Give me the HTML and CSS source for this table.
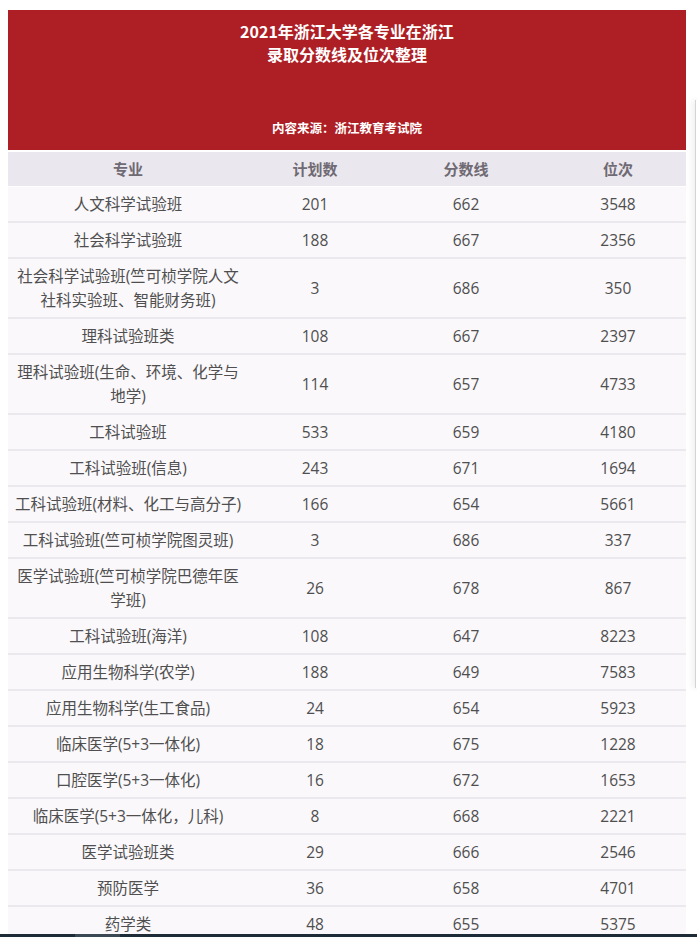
FILE: index.html
```html
<!DOCTYPE html>
<html lang="zh-CN">
<head>
<meta charset="utf-8">
<title>2021年浙江大学各专业在浙江录取分数线及位次整理</title>
<link rel="stylesheet" href="styles.css">
</head>
<body>
<main class="page">
  <header class="banner">
    <h1 class="banner-title">2021年浙江大学各专业在浙江<br>录取分数线及位次整理</h1>
    <p class="banner-source">内容来源：浙江教育考试院</p>
  </header>
  <table class="score-table">
    <colgroup>
      <col class="col-major">
      <col class="col-plan">
      <col class="col-score">
      <col class="col-rank">
    </colgroup>
    <thead>
      <tr><th>专业</th><th>计划数</th><th>分数线</th><th>位次</th></tr>
    </thead>
    <tbody>
      <tr><td>人文科学试验班</td><td>201</td><td>662</td><td>3548</td></tr>
      <tr><td>社会科学试验班</td><td>188</td><td>667</td><td>2356</td></tr>
      <tr><td>社会科学试验班(竺可桢学院人文社科实验班、智能财务班)</td><td>3</td><td>686</td><td>350</td></tr>
      <tr><td>理科试验班类</td><td>108</td><td>667</td><td>2397</td></tr>
      <tr><td>理科试验班(生命、环境、化学与地学)</td><td>114</td><td>657</td><td>4733</td></tr>
      <tr><td>工科试验班</td><td>533</td><td>659</td><td>4180</td></tr>
      <tr><td>工科试验班(信息)</td><td>243</td><td>671</td><td>1694</td></tr>
      <tr><td>工科试验班(材料、化工与高分子)</td><td>166</td><td>654</td><td>5661</td></tr>
      <tr><td>工科试验班(竺可桢学院图灵班)</td><td>3</td><td>686</td><td>337</td></tr>
      <tr><td>医学试验班(竺可桢学院巴德年医学班)</td><td>26</td><td>678</td><td>867</td></tr>
      <tr><td>工科试验班(海洋)</td><td>108</td><td>647</td><td>8223</td></tr>
      <tr><td>应用生物科学(农学)</td><td>188</td><td>649</td><td>7583</td></tr>
      <tr><td>应用生物科学(生工食品)</td><td>24</td><td>654</td><td>5923</td></tr>
      <tr><td>临床医学(5+3一体化)</td><td>18</td><td>675</td><td>1228</td></tr>
      <tr><td>口腔医学(5+3一体化)</td><td>16</td><td>672</td><td>1653</td></tr>
      <tr><td>临床医学(5+3一体化，儿科)</td><td>8</td><td>668</td><td>2221</td></tr>
      <tr><td>医学试验班类</td><td>29</td><td>666</td><td>2546</td></tr>
      <tr><td>预防医学</td><td>36</td><td>658</td><td>4701</td></tr>
      <tr><td>药学类</td><td>48</td><td>655</td><td>5375</td></tr>
    </tbody>
  </table>
</main>
<div class="side-panel"></div>
<div class="bottom-bar"><span class="bottom-bar-thumb"></span></div>
</body>
</html>
```
FILE: styles.css
```css
html {
  overflow: hidden;
  background: #ffffff;
}

body {
  margin: 10px 11px 0 8px;
  font-family: "Open Sans", "Noto Sans CJK SC", sans-serif;
  color: #4f4f4f;
}

.page {
  width: 678px;
}

.banner {
  background: #ae1f25;
  color: #ffffff;
  height: 140px;
  box-sizing: border-box;
  padding: 10px 0 0;
  display: flex;
  flex-direction: column;
  align-items: center;
  text-align: center;
}

.banner-title {
  margin: 0;
  font-family: "Noto Sans CJK SC", sans-serif;
  font-size: 16px;
  font-weight: 700;
  line-height: 23px;
}

.banner-source {
  margin: 52px 0 0;
  font-family: "Noto Sans CJK SC", sans-serif;
  font-size: 12.5px;
  font-weight: 700;
  line-height: 20px;
}

.score-table {
  width: 678px;
  margin-top: 2px;
  border-collapse: collapse;
  table-layout: fixed;
}

.col-major { width: 240px; }
.col-plan { width: 134px; }
.col-score { width: 168px; }
.col-rank { width: 136px; }

.score-table th {
  background: #ebe7ee;
  color: #6f6a73;
  font-family: "Noto Sans CJK SC", sans-serif;
  font-size: 15px;
  font-weight: 700;
  height: 34px;
  padding: 0 4px;
  line-height: 24px;
  text-align: center;
  border-bottom: 1px solid #ffffff;
}

.score-table td {
  background: #faf8fb;
  font-size: 15.5px;
  line-height: 24px;
  padding: 5px 4px;
  text-align: center;
  border-bottom: 2px solid #ebe8ee;
}

.side-panel {
  position: fixed;
  left: 695px;
  top: 100px;
  width: 20px;
  height: 588px;
  background: #ffffff;
  border-left: 1px solid #d4d4d4;
  box-shadow: -3px 0 6px rgba(0, 0, 0, 0.06);
}

.bottom-bar {
  position: fixed;
  left: 0;
  right: 0;
  bottom: 0;
  height: 3px;
  background: #1d2c37;
}

.bottom-bar-thumb {
  position: absolute;
  left: 75px;
  width: 45px;
  top: 0;
  height: 3px;
  background: #3a4954;
}
```
